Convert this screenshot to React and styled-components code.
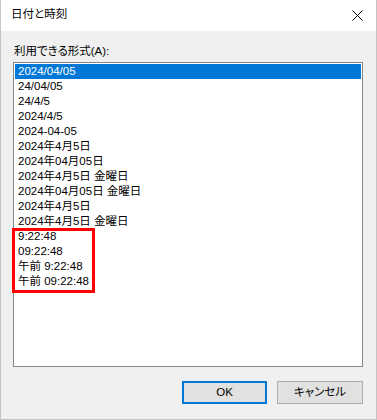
import React from "react";
import styled, { createGlobalStyle } from "styled-components";

const uiFont = `"Liberation Sans", "Noto Sans CJK JP", sans-serif`;

const GlobalStyle = createGlobalStyle`
	html, body {
		margin: 0;
		padding: 0;
		background: #ffffff;
	}
	body {
		font-family: ${uiFont};
		font-feature-settings: "palt";
		font-size: 12px;
		color: #000;
	}
`;

const Window = styled.div`
	width: 377px;
	height: 420px;
	box-sizing: border-box;
	border: 1px solid #c4c4c4;
	border-top: none;
	background: #f0f0f0;
	display: flex;
	flex-direction: column;
`;

const TitleBar = styled.div`
	height: 31px;
	flex: none;
	background: #ffffff;
	display: flex;
	align-items: center;
	justify-content: space-between;
	padding: 0 10px 0 10px;
	box-sizing: border-box;
`;

const Title = styled.span`
	font-size: 11.5px;
	line-height: 1;
	margin-top: -1px;
`;

const CloseButton = styled.button`
	border: none;
	background: transparent;
	width: 24px;
	height: 24px;
	padding: 0;
	display: flex;
	align-items: center;
	justify-content: center;
	margin-right: -3px;
`;

const Body = styled.div`
	flex: 1;
	display: flex;
	flex-direction: column;
	padding: 12px 13px 14px 12px;
`;

const Label = styled.div`
	font-size: 11.5px;
	line-height: 16px;
	margin-bottom: 3px;
	padding-left: 1px;
`;

const ListWrap = styled.div`
	position: relative;
	height: 305px;
	flex: none;
`;

const ListBox = styled.ul`
	list-style: none;
	margin: 0;
	padding: 1px;
	height: 100%;
	box-sizing: border-box;
	border: 1px solid #828790;
	background: #ffffff;
	overflow: hidden;
`;

const Item = styled.li`
	height: 15px;
	line-height: 15px;
	padding-left: 3px;
	font-size: 11.5px;
	white-space: nowrap;
	background: ${({ selected }) => (selected ? "#0078d7" : "transparent")};
	color: ${({ selected }) => (selected ? "#ffffff" : "#000000")};
`;

const Highlight = styled.div`
	position: absolute;
	left: -1px;
	top: 166px;
	width: 83px;
	height: 65px;
	box-sizing: border-box;
	border: 3px solid #ff0000;
	pointer-events: none;
`;

const ButtonRow = styled.div`
	display: flex;
	justify-content: flex-end;
	gap: 10px;
	margin-top: 14px;
`;

const Button = styled.button`
	width: ${({ wide }) => (wide ? "86px" : "85px")};
	height: 23px;
	box-sizing: border-box;
	background: #e1e1e1;
	border: ${({ primary }) => (primary ? "2px solid #0078d7" : "1px solid #adadad")};
	font-family: ${uiFont};
	font-feature-settings: "palt";
	font-size: 11.5px;
	color: #000;
	padding: 0;
	line-height: 1;
`;

const formats = [
	"2024/04/05",
	"24/04/05",
	"24/4/5",
	"2024/4/5",
	"2024-04-05",
	"2024年4月5日",
	"2024年04月05日",
	"2024年4月5日 金曜日",
	"2024年04月05日 金曜日",
	"2024年4月5日",
	"2024年4月5日 金曜日",
	"9:22:48",
	"09:22:48",
	"午前 9:22:48",
	"午前 09:22:48",
];

export default function App() {
	return (
		<>
			<GlobalStyle />
			<Window>
				<TitleBar>
					<Title>日付と時刻</Title>
					<CloseButton aria-label="閉じる">
						<svg width="11" height="11" viewBox="0 0 11 11">
							<path d="M0.5 0.5 L10.5 10.5 M10.5 0.5 L0.5 10.5" stroke="#000" strokeWidth="1" />
						</svg>
					</CloseButton>
				</TitleBar>
				<Body>
					<Label>利用できる形式(A):</Label>
					<ListWrap>
						<ListBox>
							{formats.map((f, i) => (
								<Item key={i} selected={i === 0}>
									{f}
								</Item>
							))}
						</ListBox>
						<Highlight />
					</ListWrap>
					<ButtonRow>
						<Button primary>OK</Button>
						<Button wide>キャンセル</Button>
					</ButtonRow>
				</Body>
			</Window>
		</>
	);
}
